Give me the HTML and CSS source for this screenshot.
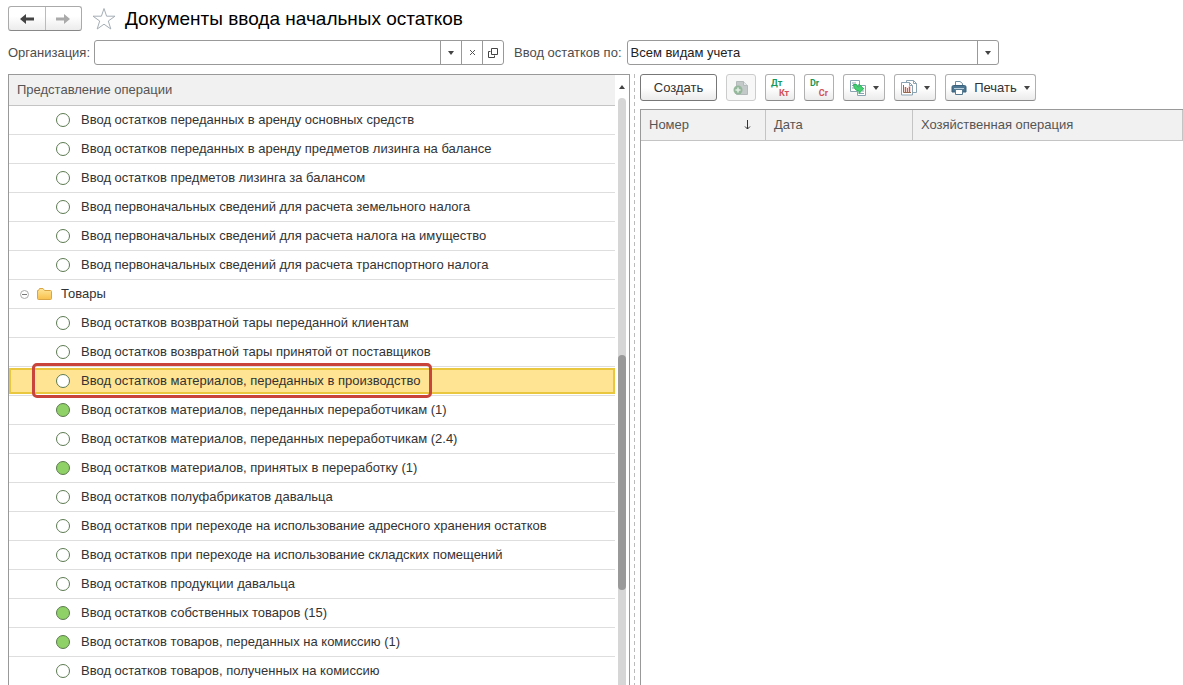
FILE: index.html
```
<!DOCTYPE html>
<html lang="ru">
<head>
<meta charset="utf-8">
<title>Документы ввода начальных остатков</title>
<link rel="stylesheet" href="styles.css">
</head>
<body>
<div class="page">
  <header class="titlebar">
    <div class="history">
      <button class="history-btn" type="button" aria-label="Назад"><svg width="16" height="12" viewBox="0 0 16 12"><path d="M1 6 7 1v3.5h8v3H7V11z" fill="#444"/></svg></button>
      <button class="history-btn" type="button" aria-label="Вперед"><svg width="16" height="12" viewBox="0 0 16 12"><path d="M15 6 9 1v3.5H1v3h8V11z" fill="#aaa"/></svg></button>
    </div>
    <button class="star" type="button" aria-label="Добавить в избранное"><svg width="24" height="24" viewBox="0 0 24 24"><path d="M12 1.500 14.600 9.200H23L16.300 14 18.800 22 12 17.200 5.200 22 7.700 14 1 9.200H9.400z" fill="#fff" stroke="#a5aeb6"/></svg></button>
    <h1 class="title">Документы ввода начальных остатков</h1>
  </header>

  <form class="filters">
    <label class="filter-label" for="org">Организация:</label>
    <div class="field field-org">
      <input class="field-input" id="org" type="text">
      <button class="field-btn" type="button" aria-label="Выбрать"><svg width="6" height="4" viewBox="0 0 6 4"><path d="M0 0h6L3 4z" fill="#444"/></svg></button>
      <button class="field-btn" type="button" aria-label="Очистить"><svg width="7" height="7" viewBox="0 0 7 7"><path d="m1 1 5 5M6 1 1 6" stroke="#555" fill="none"/></svg></button>
      <button class="field-btn" type="button" aria-label="Открыть"><svg width="10" height="10" viewBox="0 0 10 10"><path d="M3.500.5h6v6h-6zM2.500 3.500h-2v6h6v-2" stroke="#444" fill="none"/></svg></button>
    </div>
    <label class="filter-label" for="kind">Ввод остатков по:</label>
    <div class="field field-kind">
      <select class="field-select" id="kind"><option>Всем видам учета</option></select>
      <span class="field-caret"><svg width="6" height="4" viewBox="0 0 6 4"><path d="M0 0h6L3 4z" fill="#444"/></svg></span>
    </div>
  </form>

  <main class="panes">
    <section class="tree">
      <div class="tree-view">
        <table class="tree-table">
          <thead><tr><th>Представление операции</th></tr></thead>
          <tbody>
            <tr><td><div class="item"><i class="dot"></i>Ввод остатков переданных в аренду основных средств</div></td></tr>
            <tr><td><div class="item"><i class="dot"></i>Ввод остатков переданных в аренду предметов лизинга на балансе</div></td></tr>
            <tr><td><div class="item"><i class="dot"></i>Ввод остатков предметов лизинга за балансом</div></td></tr>
            <tr><td><div class="item"><i class="dot"></i>Ввод первоначальных сведений для расчета земельного налога</div></td></tr>
            <tr><td><div class="item"><i class="dot"></i>Ввод первоначальных сведений для расчета налога на имущество</div></td></tr>
            <tr><td><div class="item"><i class="dot"></i>Ввод первоначальных сведений для расчета транспортного налога</div></td></tr>
            <tr><td><div class="group">
              <button class="toggle" type="button" aria-label="Свернуть"><svg width="9" height="9" viewBox="0 0 9 9"><circle cx="4.500" cy="4.500" r="4" fill="#fff" stroke="#aaa"/><path d="M2 4.500h5" stroke="#777"/></svg></button>
              <svg width="15" height="12" viewBox="0 0 15 12"><defs><linearGradient id="fold" x2="0" y2="1"><stop stop-color="#ffe699"/><stop offset="1" stop-color="#f8c04b"/></linearGradient></defs><path d="M.5 2.500v8q0 1 1 1h12q1 0 1-1v-7q0-1-1-1H7.500L6 .5H2.500L1.500 2.500z" fill="url(#fold)" stroke="#d9a545"/></svg>
              <span class="group-name">Товары</span></div></td></tr>
            <tr><td><div class="item"><i class="dot"></i>Ввод остатков возвратной тары переданной клиентам</div></td></tr>
            <tr><td><div class="item"><i class="dot"></i>Ввод остатков возвратной тары принятой от поставщиков</div></td></tr>
            <tr class="selected"><td><div class="item"><span class="callout"></span><i class="dot"></i>Ввод остатков материалов, переданных в производство</div></td></tr>
            <tr><td><div class="item"><i class="dot dot-on"></i>Ввод остатков материалов, переданных переработчикам (1)</div></td></tr>
            <tr><td><div class="item"><i class="dot"></i>Ввод остатков материалов, переданных переработчикам (2.4)</div></td></tr>
            <tr><td><div class="item"><i class="dot dot-on"></i>Ввод остатков материалов, принятых в переработку (1)</div></td></tr>
            <tr><td><div class="item"><i class="dot"></i>Ввод остатков полуфабрикатов давальца</div></td></tr>
            <tr><td><div class="item"><i class="dot"></i>Ввод остатков при переходе на использование адресного хранения остатков</div></td></tr>
            <tr><td><div class="item"><i class="dot"></i>Ввод остатков при переходе на использование складских помещений</div></td></tr>
            <tr><td><div class="item"><i class="dot"></i>Ввод остатков продукции давальца</div></td></tr>
            <tr><td><div class="item"><i class="dot dot-on"></i>Ввод остатков собственных товаров (15)</div></td></tr>
            <tr><td><div class="item"><i class="dot dot-on"></i>Ввод остатков товаров, переданных на комиссию (1)</div></td></tr>
            <tr><td><div class="item"><i class="dot"></i>Ввод остатков товаров, полученных на комиссию</div></td></tr>
          </tbody>
        </table>
      </div>
      <div class="scrollbar">
        <svg width="6" height="4" viewBox="0 0 6 4"><path d="M0 4h6L3 0z" fill="#444"/></svg>
        <div class="scroll-track"><div class="scroll-thumb"></div></div>
      </div>
    </section>

    <div class="splitter"></div>

    <section class="documents">
      <div class="toolbar">
        <button class="btn btn-create" type="button">Создать</button>
        <button class="btn btn-icon" type="button" disabled aria-label="Скопировать"><svg width="16" height="16" viewBox="0 0 16 16"><path d="M3.500 1.500h7l4 4v9h-11z" fill="#c3c8c8" stroke="#b4baba"/><path d="M10.500 1.500v4h4" fill="#e4e7e7" stroke="#b4baba"/><circle cx="5" cy="10" r="4.500" fill="#95b89c"/><path d="M5 7.500v5M2.500 10h5" stroke="#e3eee5" stroke-width="1.500"/></svg></button>
        <button class="btn btn-icon" type="button" aria-label="Дт Кт"><span class="pair"><span class="pair-top">Дт</span><span class="pair-bottom">Кт</span></span></button>
        <button class="btn btn-icon" type="button" aria-label="Dr Cr"><span class="pair"><span class="pair-top">Dr</span><span class="pair-bottom">Cr</span></span></button>
        <button class="btn btn-menu" type="button" aria-label="Создать на основании"><svg width="18" height="18" viewBox="0 0 18 18"><path d="M1.500 1.500h9v11h-9z" fill="#fff" stroke="#8aa3b2"/><path d="M3 4h4M3 6.500h2M3 9h2" stroke="#8aa3b2"/><path d="M8.500 6.500h8v10h-8z" fill="#fff" stroke="#8aa3b2"/><path d="M13.500 9.500H15M13 12h2M10 14.500h5" stroke="#8aa3b2"/><path d="M4.500 5.500h3q.5 2.500 2.500 2.500V5l4.500 4.800L10 14.500V12Q5 11.500 4.500 5.500z" fill="#45d072" stroke="#2bb35b"/></svg><svg width="6" height="4" viewBox="0 0 6 4"><path d="M0 0h6L3 4z" fill="#444"/></svg></button>
        <button class="btn btn-menu" type="button" aria-label="Отчеты"><svg width="18" height="18" viewBox="0 0 18 18"><path d="M6.500 1.500h7l3 3v9h-10z" fill="#fff" stroke="#8aa3b2"/><path d="M13.500 1.500v3h3" fill="none" stroke="#8aa3b2"/><path d="M1.500 3.500h8l3 3v9.500h-11z" fill="#fff" stroke="#8aa3b2"/><path d="M9.500 3.500v3h3" fill="none" stroke="#8aa3b2"/><path d="M3.500 6v7.500h7.500" fill="none" stroke="#936950"/><path d="M5.500 8v5" stroke="#ce5c42" stroke-width="1.500"/><path d="M7.500 9v4" stroke="#49a25a"/><path d="M9.500 7.500V13" stroke="#d4524b" stroke-width="1.500"/></svg><svg width="6" height="4" viewBox="0 0 6 4"><path d="M0 0h6L3 4z" fill="#444"/></svg></button>
        <button class="btn btn-print" type="button"><svg width="16" height="16" viewBox="0 0 16 16"><path d="M4.500 6V1.500H9l2.500 2V6" fill="#fff" stroke="#6d8da0"/><path d="M2.500 5.500h11q1.500 0 1.500 1.500v5H1V7q0-1.500 1.500-1.500z" fill="#4b7591" stroke="#3a617b"/><path d="M3 8.500h10" stroke="#b7cfdd"/><path d="M4.500 9.500h7v5h-7z" fill="#fff" stroke="#56798f"/></svg><span>Печать</span><svg width="6" height="4" viewBox="0 0 6 4"><path d="M0 0h6L3 4z" fill="#444"/></svg></button>
      </div>
      <div class="doc-view">
        <table class="doc-table">
          <colgroup><col class="col-number"><col class="col-date"><col></colgroup>
          <thead><tr>
            <th><div class="sorted">Номер<svg width="7" height="10" viewBox="0 0 7 10"><path d="M3.500 0v9M1 6.500l2.500 2.500L6 6.500" fill="none" stroke="#333"/></svg></div></th>
            <th>Дата</th>
            <th>Хозяйственная операция</th>
          </tr></thead>
        </table>
      </div>
    </section>
  </main>
</div>
</body>
</html>
```
FILE: styles.css
```
* { box-sizing: border-box; }

body {
  margin: 0;
  background: #fff;
  color: #333;
  font: 13px/16px "Liberation Sans", Arial, sans-serif;
}

button, input, select { font: inherit; color: inherit; margin: 0; }
button { padding: 0; }
svg { display: block; flex: none; }

.page {
  display: flex;
  flex-direction: column;
  height: 100vh;
  overflow: hidden;
  padding: 6px 0 0 8px;
}

.titlebar { display: flex; align-items: center; height: 25px; }

.history {
  display: flex;
  width: 74px;
  height: 25px;
  border: 1px solid #aaa;
  border-bottom-color: #888;
  border-radius: 3px;
  background: linear-gradient(#fff 40%, #ececec);
}
.history-btn {
  flex: 1;
  display: grid;
  place-items: center;
  border: 0;
  background: none;
}
.history-btn + .history-btn { border-left: 1px solid #bbb; }

.star { margin-left: 10px; border: 0; background: none; }

.title {
  margin: 0 0 0 9px;
  color: #000;
  font-size: 19px;
  line-height: 24px;
  font-weight: 400;
}

.filters { display: flex; align-items: center; margin-top: 9px; }
.filter-label { flex: none; color: #4d4d4d; }

.field {
  display: flex;
  height: 25px;
  border: 1px solid #999;
  border-radius: 3px;
  background: #fff;
}
.field-org { flex: 0 1 410px; margin: 0 10px 0 4px; }
.field-kind { flex: 0 1 372px; margin-left: 5px; }
.field-input, .field-select {
  flex: 1;
  min-width: 0;
  padding: 0 3px;
  border: 0;
  background: none;
  color: #222;
  outline: none;
  appearance: none;
}
.field-btn, .field-caret {
  display: grid;
  place-items: center;
  width: 21px;
  border: 0;
  border-left: 1px solid #999;
  background: none;
}

.panes {
  flex: 1;
  min-height: 0;
  display: grid;
  grid-template-columns: 622fr 10px 543fr;
  margin-top: 9px;
}

.tree {
  display: flex;
  min-width: 0;
  min-height: 0;
  border: 1px solid #999;
  border-bottom: 0;
}
.tree-view { flex: 1; min-width: 0; overflow: hidden; }
.tree-table { width: 100%; border-collapse: separate; border-spacing: 0; }
.tree-table th {
  height: 31px;
  padding: 0 8px;
  border-bottom: 1px solid #c4c4c4;
  background: #f1f1f1;
  color: #555;
  font-weight: 400;
  text-align: left;
}
.tree-table td {
  height: 29px;
  padding: 0;
  border-bottom: 1px solid #dedede;
}
.item, .group {
  position: relative;
  display: flex;
  align-items: center;
  height: 28px;
  line-height: 18px;
  white-space: nowrap;
}
.item { padding-left: 47px; }
.group { padding-left: 11px; gap: 8px; }
.group-name { padding-left: 1px; }
.toggle { border: 0; background: none; }

.dot {
  flex: none;
  width: 14px;
  height: 14px;
  margin-right: 11px;
  border: 1px solid #5c7a50;
  border-radius: 50%;
  background: #fff;
}
.dot-on { background: #8fd166; }

.selected .item {
  height: 26px;
  background: #ffe494;
  border: 2px solid #e9c73f;
  padding-left: 45px;
}
.callout {
  position: absolute;
  inset: -7px auto -6px 21px;
  width: 400px;
  border: 3px solid #c9443a;
  border-radius: 5px;
}

.scrollbar {
  display: flex;
  flex-direction: column;
  align-items: center;
  width: 14px;
  padding-top: 10px;
}
.scroll-track {
  display: flow-root;
  flex: 1;
  width: 8px;
  margin-top: 9px;
  border-radius: 4px 4px 0 0;
  background: #d6d6d6;
}
.scroll-thumb {
  height: 40%;
  margin-top: 257px;
  border-radius: 4px;
  background: #999;
}

.splitter {
  width: 1px;
  margin-left: 4px;
  background: repeating-linear-gradient(#bbb 0 4px, transparent 4px 7px);
}

.documents { display: flex; flex-direction: column; min-width: 0; }
.toolbar { display: flex; gap: 9px; }
.btn {
  display: flex;
  align-items: center;
  justify-content: center;
  height: 27px;
  border: 1px solid #b0b0b0;
  border-bottom-color: #8c8c8c;
  border-radius: 3px;
  background: linear-gradient(#fff 50%, #ebebeb);
}
.btn:disabled { border-color: #ccc; background: #f7f7f7; }
.btn-create { width: 77px; border-color: #777; }
.btn-icon { width: 30px; }
.btn-menu { width: 42px; gap: 6px; }
.btn-print { width: 91px; gap: 7px; }

.pair {
  display: flex;
  flex-direction: column;
  width: 18px;
  font: 700 9px/10px Roboto, sans-serif;
}
.pair-top { align-self: flex-start; color: #16985a; }
.pair-bottom { align-self: flex-end; color: #d0525a; }

.doc-view { flex: 1; margin-top: 8px; border-left: 1px solid #999; border-top: 1px solid #999; }
.doc-table { width: 100%; table-layout: fixed; border-collapse: separate; border-spacing: 0; }
.col-number { width: 125px; }
.col-date { width: 147px; }
.doc-table th {
  height: 31px;
  padding: 0 8px;
  border-right: 1px solid #c4c4c4;
  border-bottom: 1px solid #c4c4c4;
  background: #f1f1f1;
  color: #555;
  font-weight: 400;
  text-align: left;
}
.sorted { display: flex; align-items: center; justify-content: space-between; padding-right: 6px; }
```
